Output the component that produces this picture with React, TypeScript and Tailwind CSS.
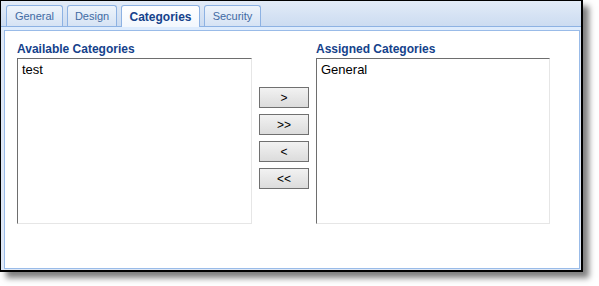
import React from "react";

const tabs = [
  { label: "General", w: "w-[57px]", active: false },
  { label: "Design", w: "w-[50px]", active: false },
  { label: "Categories", w: "w-[79px]", active: true },
  { label: "Security", w: "w-[57px]", active: false },
];

function Tab({ label, w, active }: { label: string; w: string; active: boolean }) {
  return active ? (
    <div
      className={`${w} h-[22px] -mb-px flex items-center justify-center rounded-t-[3px] border border-b-0 border-[#8db2e3] bg-gradient-to-b from-[#ffffff] to-[#f2f7fd] text-[12px] font-bold text-[#15428b]`}
    >
      {label}
    </div>
  ) : (
    <div
      className={`${w} h-[21px] flex items-center justify-center rounded-t-[3px] border border-b-0 border-[#8db2e3] bg-gradient-to-b from-[#eef4fb] to-[#d6e3f4] text-[11px] text-[#416aa3]`}
    >
      {label}
    </div>
  );
}

function ListBox({ items, w }: { items: string[]; w: string }) {
  return (
    <div
      className={`${w} h-[166px] border border-t-[#6e6e6e] border-l-[#6e6e6e] border-r-[#e6e6e6] border-b-[#e6e6e6] bg-white pt-[3px] pl-[4px] text-[13px] leading-[15px] text-black`}
    >
      {items.map((i) => (
        <div key={i}>{i}</div>
      ))}
    </div>
  );
}

function Btn({ label }: { label: string }) {
  return (
    <div className="w-[50px] h-[21px] flex items-center justify-center border border-[#707070] bg-gradient-to-b from-[#f2f2f2] to-[#dcdcdc] text-[12px] text-black">
      {label}
    </div>
  );
}

export default function App() {
  return (
    <div
      className="w-[599px] h-[286px] bg-white"
      style={{ fontFamily: '"Liberation Sans", Arial, sans-serif' }}
    >
      <div className="w-[583px] h-[272px] border-t border-l border-r-2 border-b-2 border-black bg-[#dfe8f6] shadow-[6px_6px_6px_rgba(0,0,0,0.5)] flex flex-col">
        {/* tab strip */}
        <div className="h-[26px] border-b border-[#8db2e3] bg-gradient-to-b from-[#e2ebf7] to-[#ccdcf1] pt-[4px] pl-[5px] flex items-end gap-[4px]">
          {tabs.map((t) => (
            <Tab key={t.label} {...t} />
          ))}
        </div>
        <div className="h-[3px] bg-[#deecfd]" />
        <div className="flex-1 pl-[3px] pr-[1px] pb-[1px] flex">
          <div className="flex-1 border border-[#99bbe8] bg-white pt-[11px] pl-[12px]">
            <div className="flex gap-[7px]">
              <div className="flex flex-col gap-[1px]">
                <div className="text-[12px] leading-[15px] font-bold text-[#15428b]">Available Categories</div>
                <ListBox items={["test"]} w="w-[235px]" />
              </div>
              <div className="pt-[45px] flex flex-col gap-[6px]">
                <Btn label=">" />
                <Btn label=">>" />
                <Btn label="<" />
                <Btn label="<<" />
              </div>
              <div className="flex flex-col gap-[1px]">
                <div className="text-[12px] leading-[15px] font-bold text-[#15428b]">Assigned Categories</div>
                <ListBox items={["General"]} w="w-[234px]" />
              </div>
            </div>
          </div>
        </div>
      </div>
    </div>
  );
}
